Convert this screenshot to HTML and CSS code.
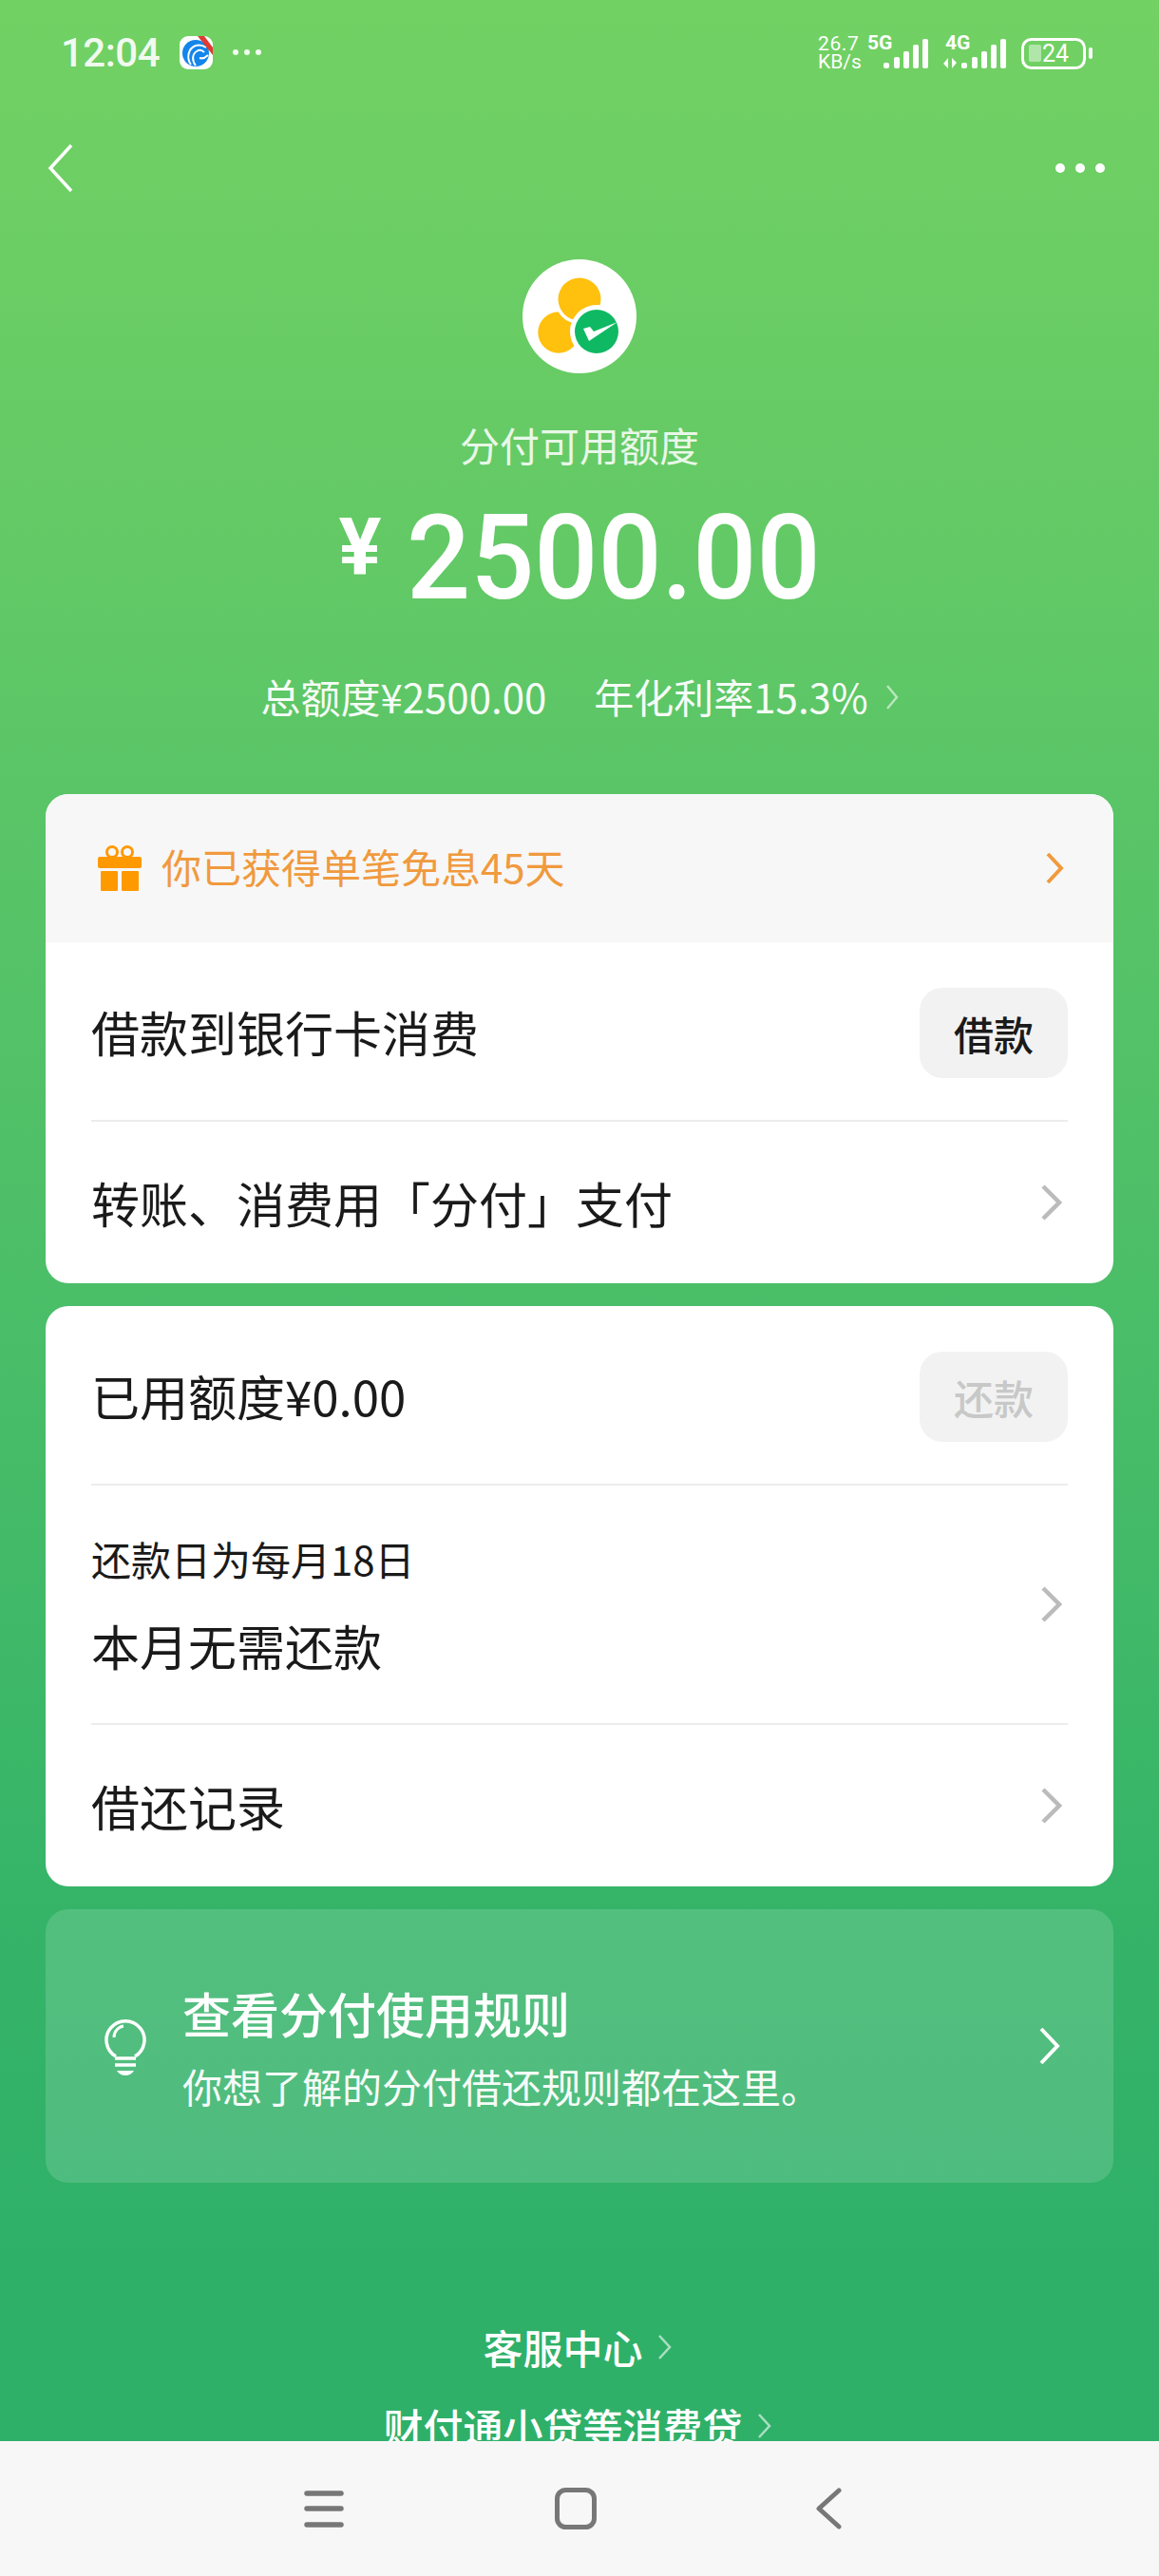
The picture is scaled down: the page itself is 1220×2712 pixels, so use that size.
FILE: index.html
```html
<!DOCTYPE html>
<html lang="zh-CN">
<head>
    <meta charset="UTF-8">
    <meta name="viewport" content="width=device-width, initial-scale=1.0">
    <title>分付</title>
    <link rel="stylesheet" href="styles.css">
</head>
<body>
    <div class="screen">
        <!-- 状态栏 -->
        <div class="status-bar">
            <span class="time">12:04</span>
            <svg class="app-icon" width="35" height="35" viewBox="0 0 35 35">
                <rect width="35" height="35" rx="9" fill="#fff"/>
                <circle cx="17" cy="18" r="14" fill="#1485ea"/>
                <path d="M12 30C7 23 9 13 17 10c4-1 8 0 11 2M17 31c-4-5-4-12 1-15 3-2 6-1 8 1M21 23c3 1 6 0 9-3" fill="none" stroke="#fff" stroke-width="2"/>
                <path d="M19 0h7l9 12v8z" fill="#dd3c33"/>
            </svg>
            <span class="status-dots"><i></i><i></i><i></i></span>
            <svg class="status-right" width="320" height="110" viewBox="850 0 320 110">
                <g fill="#fff">
                    <text x="861" y="53" class="net-speed" letter-spacing="0.6">26.7</text>
                    <text x="861" y="72" class="net-speed">KB/s</text>
                    <text x="913" y="52" class="net-type">5G</text>
                    <text x="995" y="52" class="net-type">4G</text>
                    <rect x="930" y="66" width="6" height="6" rx="2"/>
                    <rect x="941" y="60" width="6" height="12" rx="2"/>
                    <rect x="951" y="54" width="6" height="18" rx="2"/>
                    <rect x="961" y="47" width="6" height="25" rx="2"/>
                    <rect x="971" y="41" width="6" height="31" rx="2"/>
                    <path d="M998 61v11l-5-5zM1002 72V61l5 5z"/>
                    <rect x="1012" y="66" width="6" height="6" rx="2"/>
                    <rect x="1023" y="60" width="6" height="12" rx="2"/>
                    <rect x="1033" y="54" width="6" height="18" rx="2"/>
                    <rect x="1043" y="47" width="6" height="25" rx="2"/>
                    <rect x="1053" y="41" width="6" height="31" rx="2"/>
                    <rect x="1083" y="47" width="13" height="18" rx="2" opacity="0.45"/>
                    <text x="1097" y="65" class="battery-num">24</text>
                    <rect x="1146" y="50" width="4" height="12" rx="2"/>
                </g>
                <rect x="1076.500" y="41.500" width="65" height="30" rx="9" fill="none" stroke="#fff" stroke-width="3"/>
            </svg>
        </div>

        <!-- 标题栏 -->
        <div class="top-nav">
            <svg width="27" height="52" viewBox="0 0 27 52"><path d="M25 2L3 26l22 24" fill="none" stroke="#fff" stroke-width="3.500"/></svg>
            <span class="more-dots"><i></i><i></i><i></i></span>
        </div>

        <!-- 额度 -->
        <div class="hero">
            <svg class="logo" width="120" height="120" viewBox="0 0 120 120">
                <circle cx="60" cy="60" r="60" fill="#fff"/>
                <circle cx="38" cy="77" r="21.700" fill="#ffc00e"/>
                <circle cx="60" cy="42" r="26" fill="#fff"/>
                <circle cx="60" cy="42" r="22.500" fill="#ffc00e"/>
                <circle cx="78" cy="76" r="28" fill="#fff"/>
                <circle cx="78" cy="76" r="23" fill="#0fb964"/>
                <path d="M64 73l7-2 4 5 25-10-30 20z" fill="#fff"/>
            </svg>
            <div class="hero-title">分付可用额度</div>
            <div class="hero-amount"><span class="yen">¥</span><span class="amount">2500.00</span></div>
            <div class="hero-sub">
                <span>总额度¥2500.00</span>
                <span>年化利率15.3%</span>
                <svg width="14" height="28" viewBox="0 0 14 28"><path d="M2 2l10 12L2 26" fill="none" stroke="#fff" stroke-opacity="0.6" stroke-width="2.500"/></svg>
            </div>
        </div>

        <div class="cards">
            <div class="card">
                <div class="promo">
                    <svg class="gift" width="46" height="48" viewBox="0 0 46 48">
                        <circle cx="15" cy="7" r="5.500" fill="none" stroke="#ff9900" stroke-width="3"/>
                        <circle cx="31" cy="7" r="5.500" fill="none" stroke="#ff9900" stroke-width="3"/>
                        <rect y="12" width="46" height="12" rx="2" fill="#ff9900"/>
                        <rect x="3" y="27" width="18" height="21" rx="1" fill="#ff9900"/>
                        <rect x="25" y="27" width="18" height="21" rx="1" fill="#ff9900"/>
                    </svg>
                    <span class="promo-text">你已获得单笔免息45天</span>
                    <svg class="promo-arrow" width="20" height="34" viewBox="0 0 20 34"><path d="M3 2l14 15L3 32" fill="none" stroke="#f09a3e" stroke-width="4"/></svg>
                </div>
                <div class="row row-button">
                    <span class="row-text">借款到银行卡消费</span>
                    <span class="btn">借款</span>
                </div>
                <div class="row row-last">
                    <span class="row-text">转账、消费用「分付」支付</span>
                    <svg class="arrow" width="22" height="38" viewBox="0 0 22 38"><path d="M2 2l17 17L2 36" fill="none" stroke="#bbb" stroke-width="4.500"/></svg>
                </div>
            </div>

            <div class="card">
                <div class="row row-button">
                    <span class="row-text">已用额度¥0.00</span>
                    <span class="btn btn-disabled">还款</span>
                </div>
                <div class="row row-tall">
                    <div>
                        <div class="row-small">还款日为每月18日</div>
                        <div class="row-text">本月无需还款</div>
                    </div>
                    <svg class="arrow" width="22" height="38" viewBox="0 0 22 38"><path d="M2 2l17 17L2 36" fill="none" stroke="#bbb" stroke-width="4.500"/></svg>
                </div>
                <div class="row row-last">
                    <span class="row-text">借还记录</span>
                    <svg class="arrow" width="22" height="38" viewBox="0 0 22 38"><path d="M2 2l17 17L2 36" fill="none" stroke="#bbb" stroke-width="4.500"/></svg>
                </div>
            </div>

            <div class="card-rules">
                <svg class="bulb" width="44" height="62" viewBox="0 0 44 62">
                    <path d="M12 42a20 20 0 1 1 20 0" fill="none" stroke="#fff" stroke-width="3.500"/>
                    <path d="M10 22a12 12 0 0 1 10-12" fill="none" stroke="#fff" stroke-width="3"/>
                    <path d="M11 44h22M11 51h22" stroke="#fff" stroke-width="3.500"/>
                    <path d="M13 57h18q-3 5-9 5t-9-5z" fill="#fff"/>
                </svg>
                <div class="rules-text">
                    <div class="rules-title">查看分付使用规则</div>
                    <div class="rules-sub">你想了解的分付借还规则都在这里。</div>
                </div>
                <svg class="rules-arrow" width="22" height="40" viewBox="0 0 22 40"><path d="M2 2l17 18L2 38" fill="none" stroke="#fff" stroke-width="4"/></svg>
            </div>
        </div>

        <!-- 底部链接 -->
        <div class="links">
            <div class="link">客服中心<svg width="16" height="28" viewBox="0 0 16 28"><path d="M2 2l11 12L2 26" fill="none" stroke="#fff" stroke-opacity="0.6" stroke-width="2.500"/></svg></div>
            <div class="link">财付通小贷等消费贷<svg width="16" height="28" viewBox="0 0 16 28"><path d="M2 2l11 12L2 26" fill="none" stroke="#fff" stroke-opacity="0.6" stroke-width="2.500"/></svg></div>
        </div>
    </div>

    <!-- 系统导航 -->
    <div class="system-nav">
        <svg width="42" height="40" viewBox="0 0 42 40"><path d="M3 4h36M3 20h36M3 37h36" stroke="#777" stroke-width="5.500" stroke-linecap="round"/></svg>
        <svg class="nav-home" width="44" height="44" viewBox="0 0 44 44"><rect x="2.500" y="2.500" width="39" height="39" rx="9" fill="none" stroke="#777" stroke-width="5"/></svg>
        <svg class="nav-back" width="28" height="44" viewBox="0 0 28 44"><path d="M25 3L4 22l21 19" fill="none" stroke="#777" stroke-width="5" stroke-linecap="round" stroke-linejoin="round"/></svg>
    </div>
</body>
</html>
```

FILE: styles.css
```css
* {
    box-sizing: border-box;
}

html, body {
    margin: 0;
    padding: 0;
}

body {
    width: 1220px;
    height: 2712px;
    overflow: hidden;
    display: flex;
    flex-direction: column;
    font-family: "Noto Sans CJK SC", "Noto Sans", sans-serif;
    color: #1a1a1a;
}

.screen {
    height: 2570px;
    overflow: hidden;
    flex-shrink: 0;
    background: linear-gradient(180deg, #72d163 0, #62c966 600px, #5ac567 830px, #50c068 1200px, #47bc68 1500px, #35b468 2010px, #2fb069 2400px);
}

.status-bar {
    height: 110px;
    display: flex;
    align-items: center;
    padding-left: 64px;
    padding-right: 50px;
}

.time {
    font-family: Roboto, sans-serif;
    font-size: 42px;
    font-weight: 500;
    letter-spacing: -0.500px;
    color: #fff;
    opacity: 0.9;
    width: 125px;
}

.app-icon {
    flex-shrink: 0;
}

.status-dots {
    display: flex;
    gap: 6px;
    margin-left: 21px;
}

.status-dots i {
    width: 6px;
    height: 6px;
    border-radius: 50%;
    background: #fff;
    opacity: 0.9;
}

.status-right {
    margin-left: auto;
    flex-shrink: 0;
}

.net-speed {
    font-family: Roboto, sans-serif;
    font-size: 21px;
}

.net-type {
    font-family: Roboto, sans-serif;
    font-size: 21px;
    font-weight: 700;
}

.battery-num {
    font-family: Roboto, sans-serif;
    font-size: 25px;
}

.top-nav {
    height: 134px;
    display: flex;
    align-items: center;
    justify-content: space-between;
    padding: 0 57px 0 50px;
}

.more-dots {
    display: flex;
    gap: 11px;
}

.more-dots i {
    width: 10px;
    height: 10px;
    border-radius: 50%;
    background: #fff;
}

.hero {
    display: flex;
    flex-direction: column;
    align-items: center;
    color: #fff;
    height: 592px;
    padding-top: 29px;
}

.logo {
    display: block;
}

.hero-title {
    font-size: 42px;
    line-height: 60px;
    margin-top: 45px;
    opacity: 0.85;
}

.hero-amount {
    height: 130px;
    line-height: 130px;
    margin-top: 25px;
    white-space: nowrap;
    font-family: Roboto, sans-serif;
    font-weight: 500;
}

.yen {
    font-size: 84px;
    font-weight: 700;
    line-height: 1;
    vertical-align: 25px;
    margin-right: 26px;
}

/* digits are narrower in the reference than in Roboto */
.amount {
    display: inline-block;
    font-size: 125px;
    transform: scaleX(0.945);
    transform-origin: left center;
    margin-right: -25px;
}

.hero-sub {
    display: flex;
    align-items: center;
    height: 60px;
    margin-top: 49px;
    font-size: 42px;
    opacity: 0.95;
}

.hero-sub span:first-child {
    margin-right: 50px;
}

.hero-sub svg {
    margin-left: 18px;
    margin-top: 4px;
}

.cards {
    display: flex;
    flex-direction: column;
    gap: 24px;
    padding: 0 48px;
}

.card {
    background: #fff;
    border-radius: 24px;
    overflow: hidden;
}

.promo {
    height: 156px;
    background: #f7f7f7;
    display: flex;
    align-items: center;
    padding: 0 52px 0 55px;
}

.promo-text {
    font-size: 42px;
    color: #f09a3e;
    margin-left: 21px;
    margin-bottom: 5px;
    flex: 1;
}

.row {
    margin: 0 48px;
    display: flex;
    align-items: center;
    justify-content: space-between;
    border-bottom: 2px solid #ececec;
}

.row-button {
    height: 189px;
}

.row-tall {
    height: 252px;
}

.row-last {
    height: 170px;
    border-bottom: 0;
}

.row-text {
    font-size: 51px;
    line-height: 70px;
}

.row-small {
    font-size: 42px;
    line-height: 60px;
    margin-bottom: 26px;
}

.btn {
    width: 156px;
    height: 95px;
    margin-top: 4px;
    border-radius: 24px;
    background: #f2f2f2;
    display: flex;
    align-items: center;
    justify-content: center;
    font-size: 42px;
    font-weight: 500;
}

.btn-disabled {
    color: #c8c8c8;
}

.arrow {
    margin-right: 6px;
}

.card-rules {
    height: 288px;
    border-radius: 24px;
    background: rgba(255, 255, 255, 0.15);
    display: flex;
    align-items: center;
    padding: 0 56px 0 62px;
    color: #fff;
}

.rules-text {
    flex: 1;
    margin-left: 38px;
}

.rules-title {
    font-size: 51px;
    font-weight: 500;
    line-height: 72px;
}

.rules-sub {
    font-size: 42px;
    line-height: 60px;
    margin-top: 11px;
    opacity: 0.95;
}

.links {
    margin-top: 131px;
    display: flex;
    flex-direction: column;
    align-items: center;
    color: #fff;
    font-size: 42px;
    font-weight: 500;
}

.link {
    height: 83px;
    display: flex;
    align-items: center;
    padding-right: 4px;
}

.link svg {
    margin-left: 15px;
}

.system-nav {
    height: 142px;
    flex-shrink: 0;
    background: #f7f7f7;
    display: flex;
    align-items: center;
    padding-left: 320px;
}

.nav-home {
    margin-left: 222px;
}

.nav-back {
    margin-left: 230px;
}
```
